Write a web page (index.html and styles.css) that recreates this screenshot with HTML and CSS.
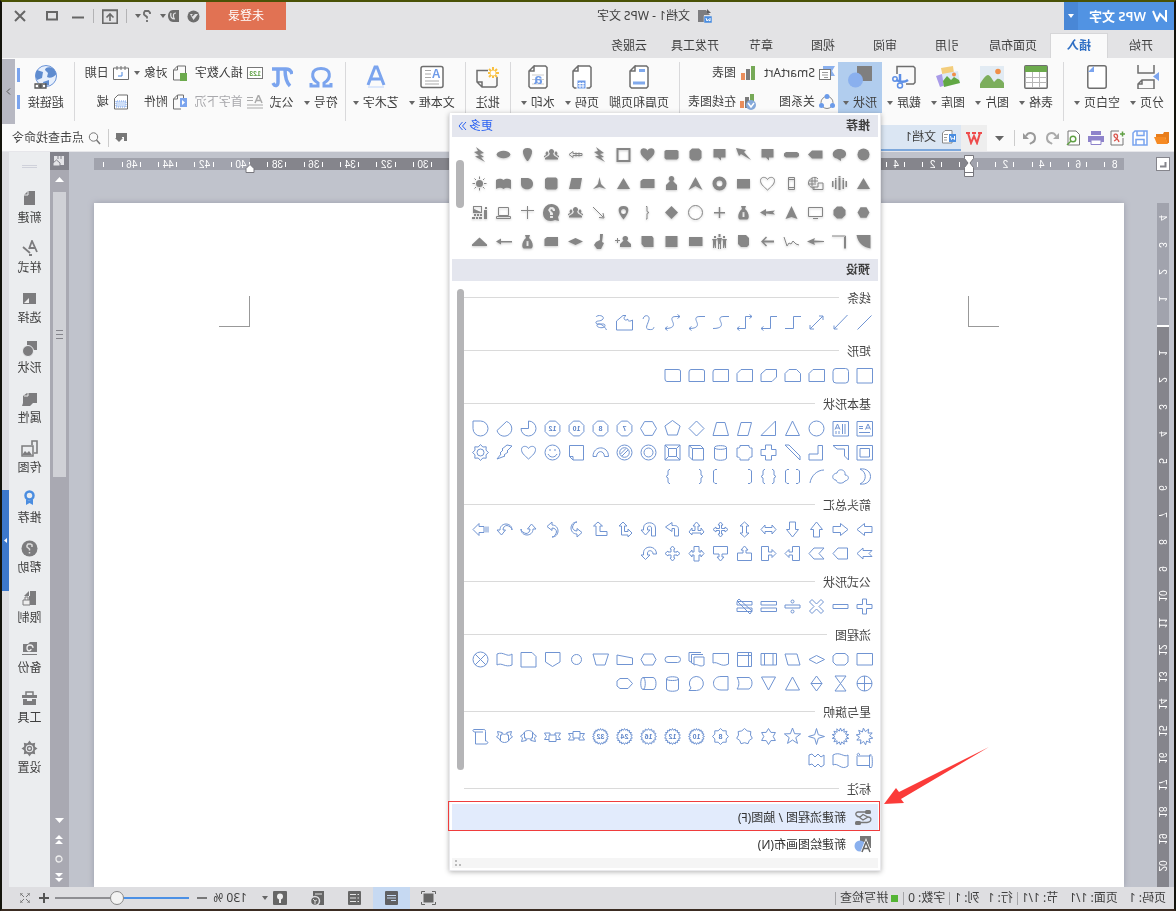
FILE: index.html
```html
<!DOCTYPE html>
<html lang="zh-CN">
<head>
<meta charset="utf-8">
<title>文档1 - WPS 文字</title>
<link rel="stylesheet" href="styles.css">
</head>
<body>
<div class="app">
  <header class="titlebar">
    <button class="brand"><svg width="15" height="12" viewBox="0 0 15 12"><path d="M1 0V10.5L7 4 10 10.5 14 1" fill="none" stroke="#fff" stroke-width="2"/></svg><span>WPS 文字</span></button>
    <button class="brand-more"><i class="caret"></i></button>
    <div class="doc-title"><svg width="15" height="15" viewBox="0 0 15 15"><path d="M6 1H14V13H8V6H2Z" fill="#7d7d80"/><path d="M6 1V5H2Z" fill="#5d5d60" transform="translate(-1 -1)"/><rect x="0" y="7" width="8" height="7" fill="#4a8de0" stroke="#e3e3e5" stroke-width=".5"/><path d="M2 9V12L4 10.500 5 12 6 9" fill="none" stroke="#fff"/></svg><span>文档1 - WPS 文字</span></div>
    <button class="login">未登录</button>
    <div class="wintools">
      <button class="tool"><svg width="13" height="13" viewBox="0 0 13 13"><circle cx="6.500" cy="6.500" r="6" fill="#6d6d6d"/><path d="M2 4H10L6.500 10Z" fill="#e3e3e5"/><path d="M5 3 8 6" stroke="#6d6d6d" stroke-width="1.500"/></svg></button>
      <button class="tool"><svg width="11" height="12" viewBox="0 0 11 12"><path d="M0 0H6C9 0 11 3 11 6S9 12 6 12H0Z" fill="#6d6d6d"/><path d="M3 3C6 3 6 5 5 9M8 3C9 6 8 9 4 9" stroke="#e3e3e5" stroke-width="1.200" fill="none"/></svg><i class="caret dark"></i></button>
      <button class="tool"><svg width="8" height="12" viewBox="0 0 8 12"><path d="M1 4V2.500L2.500 1H6L7 2.500V4.500L4 7V8.500M4 10V12" fill="none" stroke="#6d6d6d" stroke-width="1.800"/></svg><i class="caret dark"></i></button>
      <i class="tsep"></i>
      <button class="tool"><svg width="16" height="15" viewBox="0 0 16 15"><path d="M.8 1V14.200H15.200V1ZM0 1.500H16M8 12V5M4.500 8.500 8 5l3.500 3.500" fill="none" stroke="#6a6a6a" stroke-width="1.600"/></svg></button>
      <i class="tsep"></i>
      <button class="tool"><svg width="12" height="12" viewBox="0 0 12 12"><path d="M0 7.500H12" stroke="#666" stroke-width="2"/></svg></button>
      <button class="tool win"><svg width="12" height="12" viewBox="0 0 12 12"><rect x="1" y="2" width="10" height="7.500" fill="none" stroke="#666" stroke-width="2"/></svg></button>
      <button class="tool win last"><svg width="12" height="12" viewBox="0 0 12 12"><path d="M1 1 11 11M11 1 1 11" stroke="#666" stroke-width="2"/></svg></button>
    </div>
  </header>

  <nav class="tabs">
    <button class="tab">开始</button><button class="tab active">插入</button><button class="tab long">页面布局</button><button class="tab">引用</button><button class="tab">审阅</button><button class="tab">视图</button><button class="tab">章节</button><button class="tab long">开发工具</button><button class="tab">云服务</button>
  </nav>

  <section class="ribbon">
    <button class="big"><svg width="24" height="24" viewBox="0 0 24 24"><path d="M5 0V8H21V0M5 24V15H17L21 19V24ZM17 15V19H21" fill="none" stroke="#6e6e6e" stroke-width="1.500"/><path d="M0 7 6 11.500 0 16Z" fill="#7ba4ee"/></svg><span>分页<i class="caret dark"></i></span></button>
    <button class="big"><svg width="20" height="24" viewBox="0 0 20 24"><rect x=".8" y=".8" width="18.400" height="22.400" rx="2" fill="#fff" stroke="#6e6e6e" stroke-width="1.500"/><path d="M13 1V7H19Z" fill="#7ba4ee"/></svg><span>空白页<i class="caret dark"></i></span></button>
    <i class="sep"></i>
    <button class="big"><svg width="24" height="24" viewBox="0 0 24 24"><rect x=".8" y=".8" width="22.400" height="22.400" rx="1" fill="#fff" stroke="#6e6e6e" stroke-width="1.500"/><rect x="1" y="1" width="22" height="6" fill="#6caa4d"/><path d="M1 12.500H23M1 17.500H23M8.500 7V23M15.500 7V23" stroke="#b6b6b6"/></svg><span>表格<i class="caret dark"></i></span></button>
    <button class="big"><svg width="24" height="22" viewBox="0 0 24 22"><rect width="24" height="22" fill="#e2ebf3"/><path d="M0 22V17C2 14 5 12 7 13L10 16C12 13 14 9 16 9S22 14 24 18V22Z" fill="#7cae5c"/><circle cx="6" cy="5.500" r="2.800" fill="#f08f49"/></svg><span>图片<i class="caret dark"></i></span></button>
    <button class="big"><svg width="24" height="24" viewBox="0 0 24 24"><path d="M7 1 19 3 16 18 5 16Z" fill="#f3cd7c"/><path d="M18 9 24 11 20 22 14 20Z" fill="#a99be8"/><path d="M2 6 18 9 16 22 0 18Z" fill="#dce9f6"/><path d="M0 18 1 15 6 12 9 15 13 11 17 16 16 22Z" fill="#62a844"/><circle cx="6" cy="9.500" r="2" fill="#f08f49"/></svg><span>图库<i class="caret dark"></i></span></button>
    <button class="big"><svg width="24" height="24" viewBox="0 0 24 24"><path d="M10 19H2.500L1 17.500V3L2.500 1.500H19V9" fill="none" stroke="#6e6e6e" stroke-width="1.500"/><path d="M8 15C12 18 16 17 20 15M16 17V9" fill="none" stroke="#5d8fe6" stroke-width="2.500"/><circle cx="21" cy="14" r="2.200" fill="none" stroke="#5d8fe6" stroke-width="1.500"/><circle cx="16" cy="20.500" r="2.500" fill="none" stroke="#5d8fe6" stroke-width="1.500"/></svg><span>截屏<i class="caret dark"></i></span></button>
    <button class="big on"><svg width="24" height="24" viewBox="0 0 24 24"><rect y="1" width="15" height="15" fill="#7f7f7f"/><circle cx="16.500" cy="15" r="7.500" fill="#8ab0ee"/></svg><span>形状<i class="caret dark"></i></span></button>
    <div class="smalls charts">
      <button class="small"><svg width="16" height="14" viewBox="0 0 16 14"><path d="M0 0H12V4H4V10H0L3 5Z" fill="#8ab0ee"/><rect x="4.500" y="3.500" width="11" height="10" fill="#fff" stroke="#777"/><path d="M7 6.500H13M7 9H13M7 11.500H11" stroke="#999"/></svg>SmartArt</button>
      <button class="small"><svg width="16" height="14" viewBox="0 0 16 14"><path d="M1 0H5V14H1Z" fill="#76a957"/><path d="M6 3H10V14H6Z" fill="#7b7b7b"/><path d="M11 7H15V14H11Z" fill="#ea8e5c"/></svg>图表</button>
      <button class="small"><svg width="16" height="16" viewBox="0 0 16 16"><circle cx="8" cy="8.500" r="6" fill="none" stroke="#888"/><circle cx="8" cy="2.500" r="2.500" fill="#6b9bea"/><circle cx="2.500" cy="11.500" r="2.500" fill="#6b9bea"/><circle cx="13.500" cy="11.500" r="2.500" fill="#6b9bea"/></svg>关系图</button>
      <button class="small"><svg width="16" height="16" viewBox="0 0 16 16"><path d="M2 0H6V8H2Z" fill="#76a957"/><path d="M7 3H11V14H7Z" fill="#7b7b7b"/><path d="M12 7H16V14H12Z" fill="#ea8e5c"/><circle cx="5" cy="11" r="5" fill="#85a9da"/><path d="M2 9 5 13 8 9" stroke="#fff" fill="none" stroke-width="1.500"/></svg>在线图表</button>
    </div>
    <i class="sep"></i>
    <button class="big"><svg width="20" height="24" viewBox="0 0 20 24"><path d="M14 1H2.500L1 2.500V21.500L2.500 23H17.500L19 21.500V6L14 1V6H19" fill="#fff" stroke="#6e6e6e" stroke-width="1.500"/><path d="M4 5.500H10M4 18H16" stroke="#80a9ec" stroke-width="3"/></svg><span>页眉和页脚</span></button>
    <button class="big"><svg width="20" height="24" viewBox="0 0 20 24"><path d="M14 1H2.500L1 2.500V21.500L2.500 23H17.500L19 21.500V6L14 1V6H19" fill="#fff" stroke="#6e6e6e" stroke-width="1.500"/><rect x="6" y="15" width="9" height="9" fill="#6f9be8" stroke="#fff"/><path d="M9 17V23M12 17V23M7.500 18.500H14M7.500 21H14" stroke="#fff"/></svg><span>页码<i class="caret dark"></i></span></button>
    <button class="big"><svg width="20" height="24" viewBox="0 0 20 24"><path d="M14 1H2.500L1 2.500V21.500L2.500 23H17.500L19 21.500V6L14 1V6H19" fill="#fff" stroke="#6e6e6e" stroke-width="1.500"/><path d="M4 10H16M4 14.500H16M4 19H16" stroke="#ccc"/><text x="5.500" y="19" font-size="15" font-weight="700" fill="#6f9be8">a</text></svg><span>水印<i class="caret dark"></i></span></button>
    <i class="sep"></i>
    <button class="big"><svg width="24" height="24" viewBox="0 0 24 24"><path d="M12 5.500H23V17L18 22H4.500L3 20.500V12M18 22V17H23" fill="none" stroke="#6e6e6e" stroke-width="1.500"/><path d="M7 2V13M1 8H12M3 4 11 12M11 4 3 12" stroke="#f9c140" stroke-width="2"/><circle cx="7" cy="8" r="2.500" fill="#fff"/></svg><span>批注</span></button>
    <i class="sep"></i>
    <button class="big"><svg width="24" height="24" viewBox="0 0 24 24"><rect x="1" y="1.500" width="22" height="21" rx="2" fill="#fff" stroke="#6e6e6e" stroke-width="1.500"/><text x="3.500" y="13" font-size="12" font-weight="700" fill="#6f9be8">A</text><path d="M13 5.500H19M13 9H19M13 12.500H19M5 16H19M5 19H19" stroke="#aaa"/></svg><span>文本框<i class="caret dark"></i></span></button>
    <button class="big"><svg width="24" height="24" viewBox="0 0 24 24"><path d="M4 20 11 2H13L20 20M7 14H17" fill="none" stroke="#7ba4ee" stroke-width="3"/><path d="M4 22H20" stroke="#dce7fa" stroke-width="2"/></svg><span>艺术字<i class="caret dark"></i></span></button>
    <i class="sep tight"></i>
    <button class="big"><svg width="24" height="24" viewBox="0 0 24 24"><path d="M2 18V21H9V18C1 13 2 3.500 12 3.500S23 13 15 18V21H22V18" fill="none" stroke="#7ba4ee" stroke-width="3"/></svg><span>符号<i class="caret dark"></i></span></button>
    <button class="big"><svg width="22" height="24" viewBox="0 0 22 24"><path d="M1 9C2 5 4 4 7 4H21M8 4C8 11 7 17 3 21M15 4V17C15 21 18 22 20 18" fill="none" stroke="#7ba4ee" stroke-width="3.500"/></svg><span>公式</span></button>
    <div class="smalls fields">
      <button class="small wide"><svg width="16" height="12" viewBox="0 0 16 12"><rect x=".5" y=".5" width="15" height="11" fill="#fff" stroke="#777"/><text x="2" y="9" font-size="7" font-weight="700" fill="#5c9e42">123</text></svg>插入数字</button>
      <button class="small"><svg width="16" height="16" viewBox="0 0 16 16"><path d="M7 15H14.500V5L10.500 1H2.500V8M10.500 1V5H14.500" fill="none" stroke="#6e6e6e"/><rect x="1" y="8" width="7" height="8" fill="#6caa4d"/></svg>对象<i class="caret dark"></i></button>
      <button class="small last"><svg width="16" height="14" viewBox="0 0 16 14"><path d="M.5 2H15.500V13.500H.5ZM4 0V4M8 0V4M12 0V4" fill="#fff" stroke="#6e6e6e"/><path d="M7 6V10H11" stroke="#4b86dd" fill="none"/></svg>日期</button>
      <button class="small wide off"><svg width="16" height="14" viewBox="0 0 16 14"><path d="M1 8 4.500 0 8 8M2.500 5.500H7" fill="none" stroke="#aaa" stroke-width="1.500"/><path d="M10 2.500H16M10 5.500H16M0 10H16M0 13H16" stroke="#aaa"/></svg>首字下沉</button>
      <button class="small"><svg width="16" height="16" viewBox="0 0 16 16"><path d="M7 15H14.500V5L10.500 1H4.500V4M10.500 1V5H14.500" fill="none" stroke="#6e6e6e"/><rect x="1" y="4" width="7" height="9" fill="#7ba4ee"/><path d="M6 6V11L3 8.500Z" fill="#fff"/></svg>附件</button>
      <button class="small last"><svg width="16" height="16" viewBox="0 0 16 16"><path d="M1.500 15V1H11L14.500 4.500V15Z" fill="#fff" stroke="#6e6e6e"/><rect x="3" y="7" width="10" height="6" fill="#cfdff8" stroke="#7ba4ee" stroke-dasharray="1"/></svg>域</button>
    </div>
    <i class="sep"></i>
    <button class="big"><svg width="24" height="24" viewBox="0 0 24 24"><circle cx="12" cy="11" r="10.500" fill="#e6effc" stroke="#6b94d8"/><path d="M4 4C8 1 13 2 13 5L10 8 11 12C8 14 4 12 1.500 9ZM15 7 21 5C23 8 23 12 21 15L16 13ZM9 15 15 17 14 21 9 20Z" fill="#5f8ccf"/><rect x="13" y="18" width="11" height="6" fill="#fff"/><path d="M12 19H17V23H12ZM18 19H23V23H18ZM15 21H20" fill="none" stroke="#555" stroke-width="1.300"/></svg><span>超链接</span></button>
    <div class="stubs"><i></i><i></i></div>
    <button class="ribbon-next"><svg width="5" height="7" viewBox="0 0 5 7"><path d="M1 .5 4 3.500 1 6.500" fill="none" stroke="#555"/></svg></button>
  </section>

  <section class="quickbar">
    <div class="quick">
      <button><svg width="16" height="14" viewBox="0 0 16 14"><path d="M1 1H6L7 3H14V6H5L3 12H1Z" fill="#e87d1c"/><path d="M5 6H16L13 13H2Z" fill="#f68a23"/></svg></button>
      <button><svg width="16" height="16" viewBox="0 0 16 16"><path d="M1 1H13L15 3V15H1ZM4 1V5.500H11V1M4 15V9.500H12V15" fill="#fff" stroke="#79a4ee" stroke-width="1.500"/></svg></button>
      <button><svg width="16" height="16" viewBox="0 0 16 16"><path d="M7 1H15V15H3V8" fill="none" stroke="#777"/><path d="M7 12C8 8 12 8 12 5.500S8 4 8.500 7 12 11 12 11" fill="none" stroke="#d9534a" stroke-width="1.300"/><path d="M1 4H6M3.500 1.500V6.500" stroke="#60a044" stroke-width="1.500"/></svg></button>
      <button><svg width="16" height="16" viewBox="0 0 16 16"><rect x="3" y="1" width="10" height="4" fill="#8e83cb"/><path d="M0 6H16V12H0Z" fill="#8e83cb"/><path d="M3 10H13V14.500H3Z" fill="#fff" stroke="#8e83cb"/></svg></button>
      <button><svg width="16" height="16" viewBox="0 0 16 16"><path d="M2.500 7V15H14V1H6L2.500 4.500V7" fill="#fff" stroke="#777"/><circle cx="9" cy="9" r="2.800" fill="none" stroke="#60a044" stroke-width="1.400"/><path d="m11 11 4 4" stroke="#60a044" stroke-width="1.400"/></svg></button>
      <button><svg width="14" height="14" viewBox="0 0 14 14"><path d="M0 2 6 8H0Z" fill="#aaa"/><path d="M3 5C6 0 12 2 12 7S9 11 7 13" fill="none" stroke="#aaa" stroke-width="2"/></svg></button>
      <button><svg width="14" height="14" viewBox="0 0 14 14"><path d="M14 2 8 8H14Z" fill="#999"/><path d="M11 5C8 0 2 2 2 7S5 11 7 13" fill="none" stroke="#999" stroke-width="2"/></svg></button>
    </div>
    <i class="qsep"></i>
    <button class="qmore"><svg width="9" height="5" viewBox="0 0 9 5"><path d="M0 0H9L4.500 5Z" fill="#666"/></svg></button>
    <button class="home"><svg width="16" height="13" viewBox="0 0 16 13"><path d="M0 1H4M6 1H10M12 1H16M2 1 5 11 8 4 11 11 14 1" fill="none" stroke="#ee4b4b" stroke-width="2"/></svg></button>
    <button class="doc-tab"><svg width="15" height="14" viewBox="0 0 15 14"><path d="M4 .5H11L13.500 3V13H4Z" fill="#fff" stroke="#888"/><path d="M8 4.500H12M9 7.500H12M9 10H12" stroke="#999"/><rect y="4" width="7" height="8" fill="#4a8de0"/><path d="M1.500 6V9.500L3.500 8 4.500 9.500 5.500 6" fill="none" stroke="#fff"/></svg>文档1</button>
    <span class="grow"></span>
    <button class="switch"><svg width="13" height="10" viewBox="0 0 13 10"><path d="M1 0H12V5H13L9 9 5 5H6V4H4V8H1Z" fill="#777"/></svg></button>
    <label class="find"><svg width="13" height="13" viewBox="0 0 13 13"><circle cx="7.500" cy="5" r="4.200" fill="none" stroke="#777"/><path d="M4.500 8 1 12" stroke="#777" stroke-width="1.500"/></svg><input type="text" value="点击查找命令"></label>
  </section>

  <main class="main">
    <div class="workspace">
      <div class="corner"><button class="tabstop"><svg width="8" height="8" viewBox="0 0 8 8"><path d="M1.500 2V6.500H7" fill="none" stroke="#85858c" stroke-width="2"/></svg></button></div>
      <div class="hruler" id="hruler"></div>
      <div class="vruler" id="vruler"></div>
      <article class="page"><i class="mark left"></i><i class="mark right"></i></article>
    </div>
    <aside class="scroll">
      <button class="scroll-top"><svg width="12" height="12" viewBox="0 0 12 12"><path d="M1 1H11V10H1Z" fill="#e4e4e8"/><path d="M7 1V4M4 1V4" stroke="#83838c"/><path d="M5 11H12V8L8.500 5 5 8Z" fill="#e4e4e8" stroke="#83838c"/></svg></button>
      <button class="arr"><svg width="9" height="5" viewBox="0 0 9 5"><path d="M0 5 4.500 0 9 5Z" fill="#fff"/></svg></button>
      <div class="thumb"><i></i><i></i><i></i></div>
      <span class="grow"></span>
      <button class="arr"><svg width="9" height="5" viewBox="0 0 9 5"><path d="M0 0H9L4.500 5Z" fill="#fff"/></svg></button>
      <button class="arr"><svg width="8" height="9" viewBox="0 0 8 9"><path d="M0 4 4 0 8 4ZM0 9 4 5 8 9Z" fill="#fff"/></svg></button>
      <button class="arr"><svg width="8" height="8" viewBox="0 0 8 8"><circle cx="4" cy="4" r="3" fill="none" stroke="#eee" stroke-width="1.300"/></svg></button>
      <button class="arr"><svg width="8" height="9" viewBox="0 0 8 9"><path d="M0 0H8L4 4ZM0 5H8L4 9Z" fill="#fff"/></svg></button>
    </aside>
    <aside class="side" id="side"><i class="grab"></i></aside>
    <div class="edge"><button><svg width="3" height="5" viewBox="0 0 3 5"><path d="M0 0V5L3 2.500Z" fill="#fff"/></svg></button></div>
  </main>

  <footer class="status">
    <span class="s1">页码: 1</span><span class="s1">页面: 1/1</span><span>节: 1/1</span><i></i><span class="s2">行: 1</span><span>列: 1</span><i></i><span>字数: 0</span><i></i><b></b><span>拼写检查</span><i></i>
    <span class="grow"></span>
    <div class="views">
      <button><svg width="15" height="14" viewBox="0 0 15 14"><rect x="2.500" y="2.500" width="10" height="9" fill="#666"/><path d="M.5 3V.5H4M11 .5H14.500V3M.5 11V13.500H4M11 13.500H14.500V11" fill="none" stroke="#666"/></svg></button>
      <button class="on"><svg width="13" height="14" viewBox="0 0 13 14"><rect width="13" height="14" rx="1" fill="#5f6063"/><path d="M2 4.500H11M2 7H11M2 9.500H7" stroke="#c6d9f2"/></svg></button>
      <button><svg width="13" height="14" viewBox="0 0 13 14"><rect width="13" height="14" rx="1" fill="#666"/><path d="M2 3.500H3.500M5 3.500H11M2 7H3.500M5 7H11M2 10.500H3.500M5 10.500H11" stroke="#e5e5e5"/></svg></button>
      <button><svg width="13" height="14" viewBox="0 0 13 14"><path d="M0 0H11V14H0Z" fill="#666"/><path d="M2 3H9" stroke="#e5e5e5"/><circle cx="9" cy="10" r="4.500" fill="#666" stroke="#dedee1" stroke-width="1.500"/><path d="M7 9 9 10V13M9 10 11 8" stroke="#ddd" fill="none"/></svg></button>
      <button><svg width="14" height="14" viewBox="0 0 14 14"><rect width="14" height="14" rx="1" fill="#666"/><circle cx="7" cy="5.500" r="3" fill="#eee"/><path d="M6 7H8V12H6Z" fill="#eee"/></svg></button>
    </div>
    <button class="percent"><i class="caret dark"></i><span>130 %</span></button>
    <button class="zoomstep"><svg width="10" height="10" viewBox="0 0 10 10"><path d="M0 5H10" stroke="#555" stroke-width="1.500"/></svg></button>
    <input class="slider" type="range" min="0" max="100" value="54" aria-label="130 %">
    <button class="zoomstep"><svg width="10" height="10" viewBox="0 0 10 10"><path d="M0 5H10M5 0V10" stroke="#555" stroke-width="2"/></svg></button>
    <button class="expand"><svg width="10" height="10" viewBox="0 0 10 10"><path d="M0 3V0H3M7 0H10V3M10 7V10H7M3 10H0V7M1 1 4 4M9 1 6 4M9 9 6 6M1 9 4 6" fill="none" stroke="#777"/></svg></button>
  </footer>

  <section class="popup">
    <div class="band"><b>推荐</b><a href="#more">更多<svg width="9" height="10" viewBox="0 0 9 10"><path d="M1 1 4.500 5 1 9M4.500 1 8 5 4.500 9" fill="none" stroke="#2b62f2"/></svg></a></div>
    <div class="suggest"><div class="solid" id="solid"></div><i class="bar"></i></div>
    <div class="band"><b>预设</b></div>
    <div class="preset"><div class="cats" id="cats"></div><i class="bar"></i></div>
    <button class="item picked"><svg width="18" height="17" viewBox="0 0 18 17"><path d="M6 3H14C18 4 16 8 12 8L9 5.500 4 8C0 8 0 13 5 13.500H12M4 8 9 11 13 8" fill="none" stroke="#777" stroke-width="1.300"/><rect x="1" y="1" width="6" height="4" rx="1.500" fill="#777"/><rect x="11" y="12" width="6" height="4" rx="1.500" fill="#777"/></svg>新建流程图 / 脑图(F)</button>
    <button class="item"><svg width="18" height="17" viewBox="0 0 18 17"><path d="M1 0H12V6H1Z" fill="#777"/><path d="M1 0H4V12H1Z" fill="#777"/><circle cx="12" cy="10" r="5.500" fill="#8ab0ee"/><path d="M2 16 6 6 10 16M3.500 12.500H9" fill="none" stroke="#fff" stroke-width="3"/><path d="M2 16 6 6 10 16M3.500 12.500H9" fill="none" stroke="#666" stroke-width="1.500"/></svg>新建绘图画布(N)</button>
    <div class="popfoot"><svg width="6" height="6" viewBox="0 0 6 6"><path d="M4 0H6V2H4ZM4 4H6V6H4ZM0 4H2V6H0Z" fill="#bbb"/></svg></div>
  </section>
  <div class="frame"></div>
  <svg class="pointer" width="106" height="58" viewBox="0 0 106 58"><path d="M0 0 90 45 93 41 105 57 85 56 88 52Z" fill="#fb3b39"/></svg>
</div>
<script src="shapes.js"></script>
</body>
</html>
```
FILE: styles.css
```css
* { box-sizing: border-box; }
body { margin: 0; background: #0c0c0a; font: 12px/16px "Noto Sans", "Noto Sans CJK SC", sans-serif; color: #3f3f3f; overflow: hidden; }
button { border: 0; padding: 0; margin: 0; background: none; font: inherit; color: inherit; white-space: nowrap; }
button, span, label { white-space: nowrap; }
svg { display: block; flex: none; }
svg text { font-family: "Liberation Sans", sans-serif; }
a { color: #2b62f2; text-decoration: none; }
.app { position: relative; height: 100vh; display: flex; flex-direction: column; border: 2px solid #14140c; border-top-color: #4a5206; border-bottom-color: #3b2c22; transform: scaleX(-1); background: #e3e3e5; }
.grow { flex: 1; }
.caret { display: inline-block; flex: none; border: 3px solid transparent; border-top: 4px solid #fff; border-bottom: 0; }
.caret.dark { border-top-color: #666; }

.titlebar { display: flex; height: 28px; flex: none; }
.brand { display: flex; align-items: center; gap: 6px; padding: 0 8px 0 7px; width: 96px; background: #5193e3; color: #fff; font-size: 13px; font-weight: 600; }
.brand-more { width: 14px; background: #4987d6; display: flex; align-items: center; justify-content: center; }
.doc-title { flex: 1; display: flex; align-items: center; gap: 7px; padding-left: 352px; }
.login { width: 80px; background: #e17253; color: #fff; }
.wintools { width: 204px; display: flex; align-items: center; padding: 0 12px 0 6px; justify-content: space-between; }
.tool { display: flex; align-items: center; gap: 2px; }
.tool.win { padding-left: 6px; }
.tool.last { padding-left: 12px; }
.tsep { width: 1px; height: 14px; background: #b3b3b5; }

.tabs { display: flex; flex: none; height: 28px; padding: 3px 0 0 2px; }
.tab { width: 62px; }
.tab.long { width: 70px; }
.tab.active { width: 58px; margin: 0 2px; background: #fafafa; border: 1px solid #d6d6d8; border-bottom: 0; color: #2f6fc4; font-weight: 700; }

.ribbon { display: flex; flex: none; height: 67px; background: #fafafa; padding: 4px 0 0 5px; }
.big { display: flex; flex-direction: column; align-items: center; justify-content: space-between; height: 51px; padding: 3px 5px 2px; flex: none; }
.big > svg { height: 24px; }
.big span { display: flex; align-items: center; gap: 4px; }
.big.on { background: #b1cdee; }
.sep { width: 1px; height: 59px; background: #d9d9db; margin: 0 5px; flex: none; }
.sep.tight { margin: 0 2px; }
.smalls { display: grid; grid-auto-rows: 22px; row-gap: 7px; flex: none; }
.charts { grid-template-columns: 79px 68px; padding-left: 3px; width: 153px; }
.fields { grid-template-columns: 75px 59px 48px; padding-left: 2px; width: 185px; }
.small { display: flex; align-items: center; gap: 4px; }
.off { color: #a8a8ac; }
.stubs { display: flex; flex-direction: column; gap: 13px; padding: 6px 2px 0 3px; }
.stubs i { width: 3px; height: 14px; background: #7ba4ee; }
.ribbon-next { margin: -3px 0 0 auto; width: 13px; height: 65px; background: #b7b8c2; display: flex; align-items: center; justify-content: center; }

.quickbar { display: flex; flex: none; height: 27px; background: #fafafa; align-items: stretch; border-bottom: 1px solid #e6e6ea; }
.quick { display: flex; align-items: center; gap: 6px; padding-left: 4px; }
.quick button { width: 16px; display: flex; justify-content: center; }
.qsep { width: 1px; margin: 5px 10px 5px 7px; background: #ccc; }
.qmore { width: 9px; margin-right: 8px; }
.home { width: 26px; background: #eee; display: flex; align-items: center; justify-content: center; }
.doc-tab { width: 140px; display: flex; align-items: center; gap: 5px; padding-left: 5px; background: #dbe6f3; border-bottom: 2px solid #7da8dc; }
.switch { display: flex; align-items: center; width: 20px; border-right: 1px solid #ccc; margin: 4px 0; }
.find { display: flex; align-items: center; gap: 4px; padding-left: 7px; }
.find input { width: 82px; padding: 0; border: 0; background: none; font: inherit; color: #444; outline: 0; }

.main { display: flex; flex: 1; min-height: 0; }
.workspace { flex: 1; min-width: 0; display: grid; grid-template: 51px 1fr / 50px 1fr; padding-right: 25px; background: #c0c3cc; overflow: hidden; }
.corner { padding: 5px 0 0 4px; }
.tabstop { display: flex; align-items: center; justify-content: center; width: 14px; height: 14px; background: #fff; border: 1px solid #85858c; }
.hruler { height: 12px; margin-top: 6px; background: #a1a3ad; overflow-x: clip; overflow-y: visible; }
.hruler svg { overflow: visible; }
.vruler { width: 12px; margin-left: 5px; background: #a1a3ad; overflow: hidden; }
.hruler text, .vruler text { font-size: 10px; fill: #fff; text-anchor: middle; }
.page { background: #fff; display: flex; justify-content: space-between; align-items: flex-start; padding: 93px 125px 0 125px; box-shadow: 0 0 6px #9a9dab; }
.mark { width: 31px; height: 31px; border-bottom: 1px solid #999; }
.mark.left { border-right: 1px solid #999; }
.mark.right { border-left: 1px solid #999; }

.scroll { width: 19px; background: #a9a9b2; display: flex; flex-direction: column; align-items: center; }
.scroll-top { width: 19px; height: 18px; flex: none; background: #83838c; display: flex; align-items: center; justify-content: center; }
.arr { height: 19px; display: flex; align-items: center; flex: none; }
.thumb { width: 13px; height: 285px; margin-top: 3px; background: #d0d1d6; display: flex; flex-direction: column; align-items: center; justify-content: center; gap: 3px; }
.thumb i { width: 7px; height: 1px; background: #85858c; }
.side { width: 41px; background: #ebedef; display: flex; flex-direction: column; align-items: center; }
.grab { width: 15px; height: 3px; margin: 13px 0 22px; border: 1px solid #cfd1da; border-width: 1px 0; }
.side button { height: 50px; display: flex; flex-direction: column; align-items: center; gap: 3px; }
.edge { width: 7px; background: #dedee2; }
.edge button { margin-top: 338px; width: 7px; height: 101px; background: #3c78cc; display: flex; align-items: center; justify-content: center; }

.status { display: flex; flex: none; height: 22px; align-items: center; background: #dedee1; padding: 0 18px 0 8px; }
.status > i { width: 1px; height: 13px; background: #a5a5a8; margin: 0 4px; }
.status > b { width: 7px; height: 7px; background: #54b435; margin: 0 3px 0 1px; }
.s1 { margin-right: 11px; }
.s2 { margin-right: 8px; }
.views { display: flex; height: 22px; }
.views button { width: 37px; display: flex; align-items: center; justify-content: center; }
.views .on { background: #c6d9f2; }
.percent { display: flex; align-items: center; gap: 15px; margin: 0 6px 0 -7px; width: 56px; padding-left: 1px; }
.zoomstep { width: 10px; }
.slider { appearance: none; width: 134px; height: 14px; margin: 0 6px 0 8px; background: linear-gradient(90deg, #4b90e5 54%, #8e8e92 54%) center / 100% 2px no-repeat; }
.slider::-webkit-slider-thumb { appearance: none; width: 14px; height: 14px; border-radius: 50%; background: #f3f3f3; border: 1px solid #888; }
.expand { margin-left: 9px; }

.popup { position: absolute; left: 293px; top: 111px; width: 432px; padding: 2px; background: #fff; border: 1px solid #e9e9ec; border-top: 0; box-shadow: 0 1px 5px rgba(0, 0, 0, .3); }
.band { display: flex; height: 22px; align-items: center; justify-content: space-between; background: #e4e6ee; padding: 0 6px 0 8px; }
.band a { display: flex; align-items: center; gap: 2px; }
.suggest { display: flex; align-items: flex-start; justify-content: space-between; padding: 3px 4px 3px 2px; }
.solid { display: grid; grid-template-columns: repeat(17, 24px); }
.cell { height: 24px; display: flex; align-items: center; justify-content: center; }
.solid .cell { height: 29px; fill: #868686; stroke: none; }
.solid svg { filter: drop-shadow(0 1px 1px #ccc); }
.solid .ln { fill: none; stroke: #868686; }
.suggest .bar { width: 8px; height: 48px; margin-top: 20px; border-radius: 4px; background: #b5b5b7; }
.preset { display: flex; justify-content: space-between; height: 523px; padding-right: 5px; overflow: hidden; }
.preset .bar { width: 7px; height: 481px; margin-top: 8px; border-radius: 4px; background: #b5b5b7; }
.cats { flex: 1; }
.cat { display: flex; align-items: center; gap: 8px; height: 29px; padding: 7px 0 0 7px; color: #454545; }
.cat::after { content: ""; height: 1px; margin-bottom: 4px; background: #dadada; flex: 1; }
.outline { display: grid; grid-template-columns: repeat(17, 24px); padding-left: 1px; fill: none; stroke: #7094d2; }
.outline text { stroke: none; fill: #5d84c8; font-size: 7px; font-weight: 700; text-anchor: middle; }
.item { display: flex; align-items: center; gap: 8px; width: 100%; height: 27px; padding-left: 6px; color: #333; }
.picked { background: #e2ebfc; }
.popfoot { display: flex; justify-content: flex-end; align-items: center; height: 10px; padding-right: 3px; background: #f5f5f5; }
.frame { position: absolute; left: 294px; top: 799px; width: 432px; height: 30px; border: 1px solid #ef3d3d; }
.pointer { position: absolute; left: 185px; top: 745px; }
```
FILE: shapes.js
```javascript
const svg = (body, w = 17, h = 17) =>
  `<svg width="${w}" height="${h}" viewBox="0 0 ${w} ${h}">${body}</svg>`;
const p = (d, attrs = '') => `<path d="${d}" ${attrs}/>`;
const L = d => p(d, 'class="ln"');
const T = (t, y = 11) => `<text x="8.500" y="${y}">${t}</text>`;

/* Regular polygons and stars, centred in the 17px cell */
function star(n, outer, inner = outer, turn = 0) {
  const pts = [];
  const steps = inner === outer ? n : n * 2;
  for (let i = 0; i < steps; i++) {
    const r = i % 2 && inner !== outer ? inner : outer;
    const a = (i / steps + turn) * 2 * Math.PI - Math.PI / 2;
    pts.push((8.5 + r * Math.cos(a)).toFixed(1) + ' ' + (8.5 + r * Math.sin(a)).toFixed(1));
  }
  return 'M' + pts.join('L') + 'Z';
}
const disc = r => `M${8.5 - r} 8.500a${r} ${r} 0 1 0 ${2 * r} 0a${r} ${r} 0 1 0 ${-2 * r} 0Z`;
const heart = 'M8.500 15C4 11 1.500 9 1.500 5.500 1.500 1.500 7 1.500 8.500 4.500 10 1.500 15.500 1.500 15.500 5.500 15.500 9 13 11 8.500 15Z';
const bolt = 'M12 1 4 7 8 8 4 11 7 11.500 3 16 13 10.500 9 9.500 14 6 10 5Z';
const bag = 'M6 2H11L10 5C14 8 15 15 12 15.500H5C2 15 3 8 7 5ZM7.500 8V13H9.500V8Z';
const people = 'M8.500 3a2.500 2.500 0 0 1 1.500 4.500L11 9.500 15 12V13.500H2V12L6 9.500 7 7.500A2.500 2.500 0 0 1 8.500 3ZM4 5 5.500 7 4.500 9 1 11.500V10L3 9 2.500 7ZM13 5 11.500 7 12.500 9 16 11.500V10L14 9 14.500 7Z';
const crowd = 'M3 3H5V5H3ZM7.500 1H9.500V4H7.500ZM12 3H14V5H12ZM1 6H6L5 8V15H4V11L3 15H2V8ZM6 5H11L10 9V16H9V11H8V16H7V9ZM11 6H16L15 8V15H14V11L13 15H12V8Z';

const solids = [
  p(disc(6)), p('M8.500 3C17 3 17 12 11 12.500L7 15 7 12.500C0 12 0 3 8.500 3Z'), p('M1.500 4.500H12L16 8.500 12 12.500H1.500Z'),
  p('M3 6H14L16 7.500V10L14 11.500H3L1 10V7.500Z'), p('M2.500 3H14.500V11.500H10L7 14.500V11.500H2.500Z'), p('M16 2 13 10 11 8 1 14 8 6 6 4Z'), p('M2.500 3H14.500V11.500H10L7 14.500V11.500H2.500Z'),
  p('M5 2.500H12L14.500 5V12L12 14.500H5L2.500 12V5Z'), p('M3 4H14L15.500 5V12L14 13.500H3L1.500 12V5Z'), p(heart), p('M1.500 2H15.500V16H1.500ZM3.500 4V14H13.500V4Z', 'fill-rule="evenodd"'),
  p(bolt), L('M2 7.500H11V5.500L15 8.500 11 11.500V9.500H2ZM5 6.500V10.500M8 6.500V10.500'), p(people), p('M8.500 2C15 2 14 8 9 15H8C3 8 2 2 8.500 2Z'), p('M1.500 8.500C3 3.500 14 3.500 15.500 8.500 14 13.500 3 13.500 1.500 8.500Z'), p(bolt),

  p('M8.500 3 15 14H2Z'), p('M1 6H2.500V12H1ZM4 5H5.500V14H4ZM7.500 3H9.500V15H7.500ZM11.500 5H13V14H11.500ZM14.500 6H16V12H14.500ZM7.500 1H9.500V2.500H7.500ZM4 3H5.500V4.500H4ZM11.500 3H13V4.500H11.500Z'), L('M6 4C9 0 16 4 15.500 8 15 12 12 13 9 13M6 6H15M8 9H16M9 2V8M12 3V12M1 8H6V12H11V14.500H1Z'),
  L('M5.500 2.500H11.500V14.500H5.500ZM5.500 4.500H11.500M5.500 12.500H11.500'), L(heart), p('M2 4H15V13.500H2Z'), p(disc(7) + disc(3), 'fill-rule="evenodd"'), p('M8.500 2 15.500 15 8.500 11 1.500 15Z'),
  p('M8.500 1a2.700 2.700 0 0 1 1.500 5L14 10V15H3V10L7 6A2.700 2.700 0 0 1 8.500 1Z'), p('M1.500 4H13L15.500 6V13H1.500Z'), p('M8.500 3 15 14H2Z'), p('M8.500 2 10 9 15 14 8.500 12 2 14 7 9Z'), p('M2 3H12.500L15 14H4Z'),
  p('M4 2.500H13L15 4V13L13 14.500H4L2.500 13V4Z'), p('M15 3V9C15 16 3 16 3 9 3 5 6 3 9 3Z'), p('M1 5C4 3 7 4 8.500 5 10 4 13 3 16 5V14C13 12 10 13 8.500 14 7 13 4 12 1 14Z'), p(disc(3.5)) + L('M8.500 1.500V4M8.500 13V15.500M1.500 8.500H4M13 8.500H15.500M3.500 3.500 5 5M12 12 13.500 13.500M3.500 13.500 5 12M12 5 13.500 3.500'),

  p(star(6, 6, 6, 1 / 12)), p(star(8, 6.5, 6.5, 1 / 16)), L('M1.500 3.500H15.500V12.500H1.500ZM6 14.500H11'), p('M8.500 2 14.500 15 8.500 13 2.500 15Z'), p('M1 6.500 10 7.500V5L16 8.500 10 12V9.500L1 10.500 3 8.500Z'),
  p(bag), p('M7.800 3H9.200V8H14V9.500H9.200V14H7.800V9.500H3V8H7.800Z'), L(disc(7)), p('M8.500 2 15 8.500 8.500 15 2 8.500Z'), L('M10 2.500H9V7.500L7 8.500 9 9.500V15H10'),
  p('M8.500 2C15 2 15 8 8.500 15.500 2 8 2 2 8.500 2ZM8.500 5A2.500 2.500 0 0 0 8.500 10 2.500 2.500 0 0 0 8.500 5Z', 'fill-rule="evenodd"'), L('M15 3 5 13M9 13.500 4 14 5 9'), p(people),
  p('M8.500 0A8.500 8.500 0 0 1 17 8.500C17 17 10 18 5 16L1 17 2 13C-2 7 2 0 8.500 0ZM5 5V7H7L8 5 10 6 7 9V11H10V9L12 6 10 3H7ZM7 12V14H10V12Z', 'fill-rule="evenodd"'),
  L('M8.500 2V15M2 6.500H15'), L('M3.500 3.500H13.500V11.500H3.500ZM1.500 12.500H15.500V14.500H1.500Z'), p('M1 3H3V5H1ZM1 6H4V15H1ZM6 2H15V9H6ZM7 3V8L14 5V3ZM6 10H8V12H6ZM9 10H11V12H9ZM12 10H14V12H12ZM6 13H9V15H6ZM10 13H12V15H10ZM13 13H16V15H13Z', 'fill-rule="evenodd"'),

  p('M2 2H15.500C15.500 10 12 15 2 15Z'.replace('M2 2H15.500C15.500 10 12 15 2 15Z', 'M1.500 2H15.500C14 10 9 14 1.500 15.500Z')), L('M2.500 15.500V3H16M3.500 15.500V4'), p('M0 8 10 7.500 9 5 17 8.500 9 12 10 9.500 0 9Z'), L('M1 3 4 11 7 8 9 11 11 10 13 13 16 10'.replace('M1 3', 'M1 12').replace('16 10', '16 4')), p('M2 7.500H12L9 4.500 10 3.500 15 8.500 10 13.500 9 12.500 12 9.500H2Z'),
  p('M3 5 6 2H14V11L11 14H5L3 12Z'), p(crowd), p('M1.500 4H15V13H1.500Z'), p('M2.500 3H14.500V14H2.500Z'), p('M4 3H14.500V11L12 14H2.500V5Z'),
  p('M7 3a2.500 2.500 0 0 1 1.500 4.500L12 11V14H1V11L5 7.500A2.500 2.500 0 0 1 7 3ZM12 7H14V5H15V7H17V8H15V10H14V8H12Z', 'transform="translate(0 0)"'), p('M5 1 8 1 8 7 12 9 14 12 11 16H7L4 10 6 9Z'), p('M1 8.500 8.500 5 16 8.500 8.500 12Z'), p('M2 4H13L15.500 6V13H2Z'),
  p(bag), p('M0 8H11V5.500L16 8.500 11 11.500V9.500H0Z'), p('M8.500 4.500 16 11.500V13H1V11.500Z')
];
document.getElementById('solid').innerHTML = solids.map(s => `<div class="cell">${svg(s)}</div>`).join('');

const arrowR = 'M1 5.500H8.500V2.500L16 8.500 8.500 14.500V11.500H1Z';
const turned = (d, a) => p(d, `transform="rotate(${a} 8.500 8.500)"`);
const flip = d => p(d, 'transform="matrix(-1 0 0 1 17 0)"');
const bend = 'M2.500 15V9C2.500 4.500 5 4.500 9 4.500V1.500L15.500 6 9 10.500V7.500H6.500V15Z';
const uturn = 'M1.500 15V7C1.500 0 13.500 0 13.500 7V9H16L11.500 14 7 9H9.500V7C9.500 4.500 5.500 4.500 5.500 7V15Z';
const curved = 'M1 9C1 1 13 1 13 9H16L11.500 14 7.500 9H10C10 6 8 4.500 6 4.500 3.500 5 1 7 1 9Z';
const ribbonUp = 'M.5 5.500H5V3.500H12V5.500H16.500L14.500 8.500 16.500 12H11V10H6V12H.5L2.500 8.500ZM5 5.500V10H6M12 5.500V10H11';
const waveUp = 'M.5 8 3.500 6 4.500 4C7 2 10 2 12.500 4L13.500 6 16.500 8 14.500 10 15.500 13.500 11 12.500C10 10 7 10 6 12.500L1.500 13.500 2.500 10ZM4.500 4V10H6V12.500M12.500 4V10H11V12.500';
const scroll = 'M3.500 4.500V15.500M3.500 15.500H13.500C16 15.500 16 12.500 14 13M13.500 13V4H2.500C0 4 1 1 3 1.500H14.500C17 1.500 16 4 13.500 4';
const burst = n => p(star(n, 8, 6.3));
const groups = {
  '线条': [
    p('M1.500 1.500 15.500 15.500'), p('M1.500 1 15 15M11.500 15H15V11.500'), p('M2 2 15 15M11 15H15V11M2 6V2H6'), p('M0 2.500H7.500V14.500H16'),
    p('M0 2.500H6.500V14.500H16M13.500 12.500 16 14.500 13.500 16.500'), p('M1 2.500H7.500V14.500H16M13.500 12.500 16 14.500 13.500 16.500M3.500 .5 1 2.500 3.500 4.500'),
    p('M0 2.500H5C11 2.500 9 6 8 8.500S7 14.500 16 14.500'), p('M0 2.500H5C11 2.500 9 6 8 8.500S7 14.500 16 14.500M13.500 12.500 16 14.500 13.500 16.500'),
    p('M1 2.500H5C11 2.500 9 6 8 8.500S7 14.500 16 14.500M13.500 12.500 16 14.500 13.500 16.500M3.500 .5 1 2.500 3.500 4.500'),
    p('M14 5C13 0 7 1 8 5.500S13 15 8 15.500 3.500 14 3 13'), p('M.5 16V6C3 8 6 7 5 5 8 8 11 4 7 1.500H10L16.500 7V16Z'), p('M13 3C11 0 4 2 6 5S14 6 13 9 4 8 4 11.500 13 14 12 11 5 11 2.500 16')],
  '矩形': [
    p('M.5 1.500H16V16H.5Z'), '<rect x=".5" y="1.500" width="15.500" height="14.500" rx="3"/>', p('M.5 2.500H12L16 6.500V14.500H.5Z'), p('M.5 14.500V6.500L4.500 2.500H12L16 6.500V14.500Z'),
    p('M.5 2.500H11L16 7V14.500H5L.5 10Z'), p('M.5 14.500V2.500H12L16 6.500V14.500Z'), p('M.5 2.500H14Q16 2.500 16 5V14.500H.5Z'), p('M.5 14.500V4Q.5 2.500 3 2.500H14Q16 2.500 16 5V14.500Z'), p('M.5 4Q.5 2.500 3 2.500H16V12Q16 14.500 14 14.500H.5Z')],
  '基本形状': [
    p('M.5 1.500H16V16H.5ZM3 12.500H14M10 6.500H14M10 8.500H14') + p('M2.500 9.500 5 4 7.500 9.500M3.500 8H7'), p('M.5 1.500H16V16H.5ZM4 4V14M6.500 4V14M10 11V14M13 11V14') + p('M9 9.500 11.500 4 14 9.500M10 8H13'),
    p(disc(7.5)), p('M8.500 1 15.500 15.500H1.500Z'), p('M1.500 1V15.500H16Z'), p('M1.500 2.500H12L15.500 15.500H5Z'), p('M4 2.500H12.500L16 15.500H.5Z'), p('M8.500 1 16 8.500 8.500 16 1 8.500Z'), p(star(5, 8)), p(star(6, 8, 8, 1 / 12)),
    p(star(8, 8, 8, 1 / 16)) + T(7), p(star(8, 8, 8, 1 / 16)) + T(8), p(star(8, 8, 8, 1 / 16)) + T(10), p(star(8, 8, 8, 1 / 16)) + T(12),
    p('M8.500 1V8.500H1A7.500 7.500 0 1 0 8.500 1Z'.replace('M8.500 1V8.500H1A7.500 7.500 0 1 0 8.500 1Z', 'M8.500 1V8.500H16A7.500 7.500 0 1 1 8.500 1Z')).replace('/>', ' transform="matrix(1 0 0 1 0 0)"/>'), p('M6.500 1.500 16 10.500A7.500 7.500 0 1 1 6.500 1.500Z'), p('M16 1V8.500A7.500 7.500 0 1 1 8.500 1Z'),
    p('M.5 1.500H16V16H.5ZM3.500 4.500V13H13V4.500Z'), p('M.5 1.500H16L12 5H4.500V12L.5 16Z'), p('M.5 1.500H5V11H16V16H.5Z'.replace('M.5 1.500H5V11H16V16H.5Z', 'M2.500 1.500H7V10H16V16H2.500Z')), p('M1 16V12L12 1H16Z'), p('M5.500 1H11.500V5.500H16V11.500H11.500V16H5.500V11.500H1V5.500H5.500Z'),
    p('M4 1.500H13V3L14.500 4H16V13H14.500L13 14.500V16H4V14.500L2.500 13H1V4H2.500L4 3Z'), p('M2.500 3.500C2.500 1 14.500 1 14.500 3.500V14C14.500 17 2.500 17 2.500 14ZM2.500 3.500C2.500 6 14.500 6 14.500 3.500'), p('M4.500 1.500H16L12.500 4.500V16H1.500V4.500L4.500 1.500M16 1.500V12.500L12.500 16M1.500 4.500H12.500'),
    p('M1 1H16V16H1ZM4.500 4.500H12.500V12.500H4.500ZM1 1 4.500 4.500M16 1 12.500 4.500M1 16 4.500 12.500M16 16 12.500 12.500'), p(disc(7.5) + disc(4.5)), p(disc(7.5) + disc(4.8) + 'M5 6 11 12M7 4.500 12.500 10'),
    p('M.5 12.500C.5 1 16 1 16 12.500H12.500C12 6 5 6 4.500 12.500Z'), p('M1.500 1.500H15.500V12.500L12 16H1.500ZM12 16V12.500H15.500'), p(disc(7.5) + 'M5 6H7M10 6H12M4 10C6 14 11 14 13 10'), p(heart), p('M1 2 6 1 11 5 10 6 13 9 12 10 16 15 8 12 9 11 5 8 6 7Z'), p(star(8, 8, 6)) + p(disc(3.5)),
    p('M4 1C12 1 12 16 4 16 17 19 17-1 4 1Z'.replace('M4 1C12 1 12 16 4 16 17 19 17-1 4 1Z', 'M13 1C-1-1-1 18 13 16 6 13 6 4 13 1Z')), p('M4 13C-1 12 0 7 4 7 3 1 11 0 12 5 18 6 17 12 13 12 12 16 6 16 4 13Z'), p('M1 2C8 2 14 8 15 15'), p('M5 1.500H3L1.500 3V14L3 15.500H5M12 1.500H14L15.500 3V14L14 15.500H12'), p('M5 1.500H4L3 3V7L1 8.500 3 10V14L4 15.500H5M12 1.500H13L14 3V7L16 8.500 14 10V14L13 15.500H12'),
    p('M5 1.500H3L1.500 3V14L3 15.500H5'), p('M12 1.500H14L15.500 3V14L14 15.500H12'), p('M6 1.500H5L4 3V7L2 8.500 4 10V14L5 15.500H6'), p('M11 1.500H12L13 3V7L15 8.500 13 10V14L12 15.500H11')],
  '箭头总汇': [
    p(arrowR), turned(arrowR, 180), turned(arrowR, 270), turned(arrowR, 90), p('M1 8.500 5 4V6.500H12V4L16 8.500 12 13V10.500H5V13Z'), p('M8.500 1 13 5H10.500V12H13L8.500 16 4 12H6.500V5H4Z'),
    p('M8.500 1 11 4H9.500V7.500H13V6L16 8.500 13 11V9.500H9.500V13H11L8.500 16 6 13H7.500V9.500H4V11L1 8.500 4 6V7.500H7.500V4H6Z'), p('M8.500 1 12 5H10V9.500H13V7L16 11 13 14V12H4V14L1 11 4 7V9.500H7V5H5Z'),
    p(bend), p(uturn), p('M1 12 5 8V10.500H8.500V5H6L10 1 14 5H11.500V14H5V16Z'), p('M2 10.500H9V5H6.500L11 1 15.500 5H13V14.500H2Z'), turned(curved, 90), turned(curved, 270), turned(curved, 180), p(curved), p('M1 5.500V11.500M3 5.500V11.500M5 5.500H10V2.500L16 8.500 10 14.500V11.500H5Z'),
    p('M1 5.500H10V3L16 8.500 10 14V11.500H1L4 8.500Z'), p('M1.500 3H11L16 8.500 11 14H1.500Z'), p('M1 3H11L16 8.500 11 14H1L6 8.500Z'), p('M1.500 1.500H8.500V7H12V4.500L16 8.500 12 12.500V10H8.500V15.500H1.500Z'), flip('M1.500 1.500H8.500V7H12V4.500L16 8.500 12 12.500V10H8.500V15.500H1.500Z'),
    p('M1.500 15.500V8H7V5H5L8.500 1 12 5H10V8H15.500V15.500Z'), p('M1.500 1.500V9H7V12H5L8.500 16 12 12H10V9H15.500V1.500Z'), p('M1 8.500 4 5V7H6V1.500H11V7H13V5L16 8.500 13 12V10H11V16H6V10H4V12Z'), p('M8.500 1 11 4H10V7H13V6L16 8.500 13 11V10H10V13H11L8.500 16 6 13H7V10H4V11L1 8.500 4 6V7H7V4H6Z'), p('M.5 9C.5 0 13.500 0 13.500 8V10H16L11.500 14.500 7 10H9.500V8C9.500 5 4 4.500 4 9Z')],
  '公式形状': [
    p('M6.500 1H10.500V6.500H16V10.500H10.500V16H6.500V10.500H1V6.500H6.500Z'), p('M1 6.500H16V10.500H1Z'), p('M4 1.500 8.500 6 13 1.500 15.500 4 11 8.500 15.500 13 13 15.500 8.500 11 4 15.500 1.500 13 6 8.500 1.500 4Z'), p('M1 7H16V10H1Z') + '<circle cx="8.500" cy="3.500" r="1.500"/><circle cx="8.500" cy="13.500" r="1.500"/>',
    p('M.5 3.500H16V7H.5ZM.5 10H16V13.500H.5Z'), p('M1 3.500H16V7H1ZM1 10H16V13.500H1ZM14 1 1 13 3 16 16 3Z')],
  '流程图': [
    p('M.5 2.500H16V14H.5Z'), p('M4 2.500H13L16 5V11L13 14H4L1 11V5Z'), p('M.5 8.500 8.500 4.500 16 8.500 8.500 12.500Z'), p('M4 2.500H16L13 13.500H1Z'.replace('M4 2.500H16L13 13.500H1Z', 'M4 3H16L13 14H1Z')), p('M.5 2.500H16V14H.5ZM4 2.500V14M12.500 2.500V14'), p('M1.500 1.500H15.500V15.500H1.500ZM4.500 1.500V15.500M1.500 4.500H15.500'),
    p('M.5 2.500H16V12C11 10 8 17 .5 13Z'), p('M4 1.500H16V10L14 11M2 3.500H13.500V12L11 13M1 6H11V14C8 12 5 17 1 14Z'), '<rect x=".5" y="5.500" width="15.500" height="6" rx="3"/>', p('M4 3H13L16 8.500 13 14H4L1 8.500Z'), p('M.5 7 16 4V13.500H.5Z'), p('M.5 3H16L13 14H4Z'), p(disc(5)), p('M1 1.500H15.500V11L8.500 15.500 1 11Z'), p('M5 1.500H16V16H1V5.500Z'), p('M1 3C6 7 9 0 16 3V14C11 11 8 17 1 14Z'), p(disc(7.5) + 'M3 3 14 14M14 3 3 14'),
    p(disc(7.5) + 'M8.500 1V16M1 8.500H16'), p('M3 1H14L3 16H14Z'), p('M8.500 1 14 8.500 8.500 16 3 8.500ZM3 8.500H14'), p('M8.500 2 15.500 15H1.500Z'), p('M8.500 15 15.500 2H1.500Z'), p('M4 2.500H16C13.500 6 13.500 11 16 14H4C0 12 0 4 4 2.500Z'), p('M1 1.500H8C18 1.500 18 15 8 15H1Z'), p('M16 15.500H8.500A7 7 0 1 1 14 13Z'), p('M2.500 4C2.500 1 14.500 1 14.500 4V14C14.500 17 2.500 17 2.500 14ZM2.500 4C2.500 6 14.500 6 14.500 4'), p('M4 2.500H14C17 2.500 17 14.500 14 14.500H4C0 14.500 0 2.500 4 2.500M14 2.500C11 2.500 11 14.500 14 14.500'), p('M5 3.500H13L16 6V11L13 13.500H5L.5 8.500Z')],
  '星与旗帜': [
    p(star(10, 8.5, 5, 0.02)), p(star(14, 8.5, 5.5)), p(star(4, 8, 2.5)), p(star(5, 8.5, 3.5)), p(star(6, 8, 4.7)), p(star(7, 8, 6.2)), p(star(8, 8, 6.2)) + T(8), burst(20) + T(10), burst(18) + T(12), burst(16) + T(16), burst(18) + T(24), burst(20) + T(32),
    p(ribbonUp), turned(ribbonUp, 180), p(waveUp), turned(waveUp, 180), p('M3.500 13V3.500C3.500 1 5 1.500 6 1.500H15C17 2 16 4 14 4H6M13.500 4V16H3C0 15.500 1 13 3.500 13'),
    p('M13.500 3V2C15 0 17 3 15 4H3.500C1 4 1 2 3.500 3V15.500H1.500C0 14 1 4 1 4M3.500 13.500H16V4'), p('M1 3C5 6 9-1 16 3V13C11 10 8 19 1 14Z'), p('M1 3 4 5 7 2 10 5 13 2 16 3V13L13 12 10 15 7 12 4 15 1 13Z')],
  '标注': []
};
document.getElementById('cats').innerHTML = Object.entries(groups).map(([name, list]) =>
  `<div class="cat">${name}</div><div class="outline">${list.map(s => `<div class="cell">${svg(s)}</div>`).join('')}</div>`).join('');

/* Rulers: one unit is about 18px across and 27px down */
const unit = 18.2, zero = 155;
let h = `<rect x="${zero}" width="719" height="12" fill="#85858c"/>`;
for (let i = -8; i <= 47; i++) {
  const x = zero + i * unit;
  if (i % 2 === 0 && i !== 0) h += `<text x="${x.toFixed(1)}" y="10">${Math.abs(i)}</text>`;
  h += `<rect x="${Math.round(x + unit / 2)}" y="4" width="1" height="5" fill="#fff"/>`;
}
/* Indent markers at both margins */
h += `<path d="M${zero - 4.5} -2.500h9v3l-3.500 4.500 3.500 4.500v9h-9v-9l3.500-4.500-3.500-4.500ZM${zero - 4.5} 14.500h9" fill="#fff" stroke="#77777d"/>`;
h += `<path d="M870 14.500v-4l4-4 4 4v4Z" fill="#fff" stroke="#77777d"/>`;
document.getElementById('hruler').innerHTML = `<svg width="1030" height="12">${h}</svg>`;

let v = '<rect y="124" width="12" height="600" fill="#85858c"/><rect y="122" width="12" height="2" fill="#fff"/>';
for (let i = -4; i <= 20; i++) {
  const y = 123 + i * 27;
  if (i) v += `<text transform="translate(10 ${y}) rotate(-90)">${Math.abs(i)}</text>`;
}
document.getElementById('vruler').innerHTML = `<svg width="12" height="686">${v}</svg>`;

const g = 'fill="#7c7c7e"';
const side = [
  ['新建', p('M3 1H10L14 5V15H3Z', g) + p('M10 1V5H14', 'fill="none" stroke="#ebedef"')],
  ['样式', p('M1 12 6 1 9 9M3 8H8', 'fill="none" stroke="#7c7c7e" stroke-width="1.800"') + p('M8 13 15 7M6 15H9', 'stroke="#7c7c7e" stroke-width="1.800"')],
  ['选择', p('M2 3H15V14H2Z', g) + p('M9 13V8L14 13Z', 'fill="#eee"')],
  ['形状', p('M1 1H11V10H1Z', g) + '<circle cx="10" cy="11" r="5.500" fill="#7c7c7e" stroke="#ebedef"/>'],
  ['属性', p('M1 3H11L15 6V13L16 16H8L5 13H1Z', g) + p('M10 3V6H14', 'fill="none" stroke="#eee"')],
  ['传图', p('M6 5V1H1V13H4', 'fill="none" stroke="#7c7c7e" stroke-width="1.600" transform="translate(0 0)"') + p('M5 6H16V16H5Z', 'fill="none" stroke="#7c7c7e" stroke-width="1.500"') + p('M6 15 9 11 11 13 13 11 16 15Z', g)],
  ['推荐', '<circle cx="8.500" cy="5.500" r="4" fill="none" stroke="#4a8de0" stroke-width="2.500"/>' + p('M5 9V15L8.500 13 12 15V9L9 11Z', 'fill="#4a8de0"')],
  ['帮助', '<circle cx="8.500" cy="8.500" r="8" fill="#7c7c7e"/>' + p('M6 7V5L7.500 4H10L11 5.500V7L8.500 9V10.500M8.500 12V13.500', 'fill="none" stroke="#ddd" stroke-width="1.500"')],
  ['限制', p('M2 1H8V6H9V15H2Z', g) + p('M9 1V6H14Z', g) + p('M8 10H15V15H8ZM10 10V7H13V10', 'fill="#eee" stroke="#7c7c7e"')],
  ['备份', p('M1 2H8L10 4H15V12H1ZM1 14H16V15H1Z', g) + p('M5 8C5 4 11 4 11 8S7 11 7 9', 'fill="none" stroke="#eee" stroke-width="1.300"')],
  ['工具', p('M1 5H16V8H1ZM2 9H6V11H11V9H15V15H2Z', g) + p('M5 5V2H12V5', 'fill="none" stroke="#7c7c7e" stroke-width="1.500"')],
  ['设置', p(star(8, 8, 5.5), g) + '<circle cx="8.500" cy="8.500" r="5.500" fill="#7c7c7e"/><circle cx="8.500" cy="8.500" r="3.800" fill="#ebedef"/><circle cx="8.500" cy="8.500" r="2" fill="none" stroke="#7c7c7e" stroke-width="1.300"/>']
];
document.getElementById('side').insertAdjacentHTML('beforeend',
  side.map(([t, s]) => `<button>${svg(s)}${t}</button>`).join(''));
```
